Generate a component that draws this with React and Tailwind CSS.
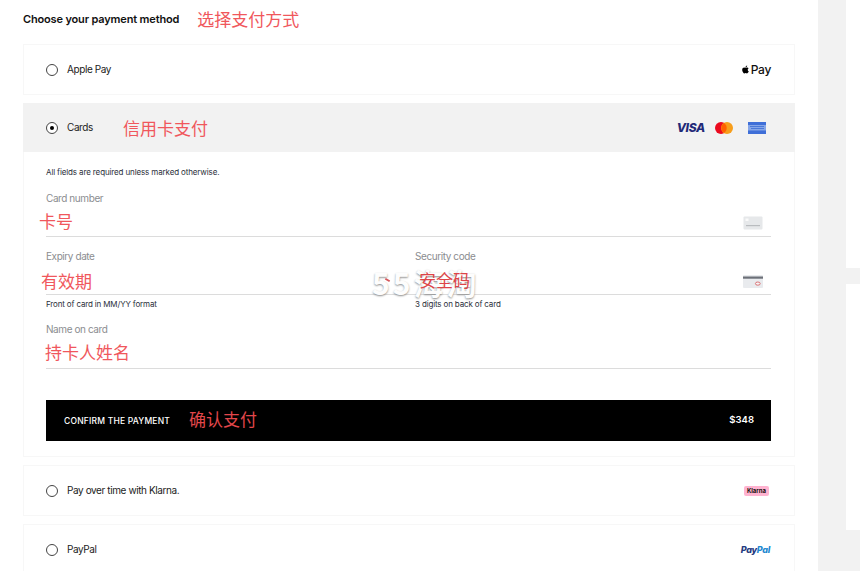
import React from "react";
import { FaApple } from "react-icons/fa";

function Note({ children, className = "" }) {
  return (
    <span className={`relative z-10 font-['Noto_Sans_CJK_SC',sans-serif] text-[17px] leading-6 whitespace-nowrap ${className}`}>
      {children}
    </span>
  );
}

function Radio({ checked }) {
  return (
    <span className="flex h-[12px] w-[12px] shrink-0 items-center justify-center rounded-full border border-[#444] bg-white">
      {checked && <span className="h-[4px] w-[4px] rounded-full bg-black" />}
    </span>
  );
}

function Row({ label, right }) {
  return (
    <div className="flex h-[51px] items-center justify-between border border-[#f7f7f7] pl-[22px] pr-[24px]">
      <div className="flex items-center gap-[9px]">
        <Radio />
        <span className="text-[10px] tracking-[-0.4px] text-[#222]">{label}</span>
      </div>
      {right}
    </div>
  );
}

function Label({ children }) {
  return <div className="h-[14px] text-[10px] leading-[14px] tracking-[-0.42px] text-[#8b8d90]">{children}</div>;
}

function Helper({ children }) {
  return <div className="mt-[3px] h-[12px] text-[8px] leading-[12px] tracking-[-0.15px] text-[#2b2f3a]">{children}</div>;
}

function FrontCard() {
  return (
    <svg width="20" height="14" viewBox="0 0 20 14" className="mr-[8px] mt-[4px]">
      <rect x="0.5" y="0.5" width="19" height="13" rx="1" fill="#e6e8ea" />
      <rect x="2.5" y="2.5" width="3" height="2.5" fill="#fafafa" />
      <rect x="3" y="9" width="14" height="1.2" fill="#b9bcbf" />
    </svg>
  );
}

function BackCard() {
  return (
    <svg width="20" height="13" viewBox="0 0 20 13" className="mr-[8px] mt-[3px]">
      <rect x="0" y="0" width="20" height="13" rx="1" fill="#e9ebee" />
      <rect x="0" y="1.5" width="20" height="2.2" fill="#6c7078" />
      <ellipse cx="14.8" cy="8.6" rx="2.4" ry="1.6" fill="#f5f5f5" stroke="#d5575b" strokeWidth="0.8" />
    </svg>
  );
}

export default function App() {
  return (
    <div className="flex h-[571px] w-[860px] overflow-hidden bg-[#f2f2f2] font-['Inter',sans-serif]">
      <div className="w-[818px] shrink-0 bg-white px-[23px]">
        <div className="flex h-[44px] items-start pt-[7px]">
          <span className="text-[11px] leading-6 font-semibold tracking-[-0.16px] text-[#111]">Choose your payment method</span>
          <Note className="ml-[18px] text-[#f0575c]">选择支付方式</Note>
        </div>

        <Row
          label="Apple Pay"
          right={
            <span className="-mr-[1px] flex items-center text-[12px] font-medium tracking-[-0.3px] text-[#111]">
              <FaApple className="mb-[1px] h-[9px] w-[9px] text-black" />
              <span className="ml-[1px]">Pay</span>
            </span>
          }
        />

        <div className="mt-[8px] border border-t-0 border-[#f7f7f7]">
          <div className="-mx-px flex h-[49px] items-center justify-between bg-[#f2f2f2] pl-[23px] pr-[29px]">
            <div className="flex items-center">
              <Radio checked />
              <span className="ml-[9px] text-[10px] tracking-[-0.4px] text-[#222]">Cards</span>
              <Note className="ml-[30px] text-[#f0575c]">信用卡支付</Note>
            </div>
            <div className="flex items-center">
              <span className="text-[12px] font-extrabold italic tracking-[-0.3px] text-[#1f2a78]">VISA</span>
              <svg width="18" height="12" viewBox="0 0 18 12" className="ml-[10px]">
                <circle cx="6" cy="6" r="6" fill="#eb0a1e" />
                <circle cx="12" cy="6" r="6" fill="#f79e1b" />
                <path d="M9 1a6 6 0 0 1 0 10a6 6 0 0 1 0-10z" fill="#ff5f00" />
              </svg>
              <svg width="18" height="12" viewBox="0 0 18 12" className="ml-[15px]">
                <rect width="18" height="12" fill="#3f6fd8" />
                <rect x="0" y="3" width="18" height="5.5" fill="#86a6e8" />
                <rect x="2" y="4" width="14" height="1" fill="#4a78d8" />
                <rect x="3" y="6" width="13" height="1" fill="#4a78d8" />
              </svg>
            </div>
          </div>

          <div className="pl-[22px] pr-[23px] pb-[15px]">
            <div className="mt-[14px] h-[12px] text-[8px] leading-[12px] tracking-[-0.13px] text-[#2b2f3a]">
              All fields are required unless marked otherwise.
            </div>

            <div className="mt-[13px]">
              <Label>Card number</Label>
              <div className="flex h-[32px] items-center justify-between border-b border-[#dcdcdc]">
                <Note className="-ml-[7px] text-[#f0575c]">卡号</Note>
                <FrontCard />
              </div>
            </div>

            <div className="relative mt-[12px] grid grid-cols-[369px_356px]">
              <span className="pointer-events-none absolute left-[326px] top-[17px] font-['Noto_Sans_CJK_SC',sans-serif] text-[30px] leading-[32px] font-bold tracking-[3px] whitespace-nowrap text-[#fdfdfd] [text-shadow:0_1px_2px_#8f8f8f]">
                55海淘
                <span className="absolute left-[13px] top-[13px] h-[2px] w-[5px] rotate-[30deg] bg-[#d5575b]" />
              </span>
              <div>
                <Label>Expiry date</Label>
                <div className="flex h-[32px] items-center border-b border-[#dcdcdc] pt-[4px]">
                  <Note className="-ml-[5px] text-[#f0575c]">有效期</Note>
                </div>
                <Helper>Front of card in MM/YY format</Helper>
              </div>
              <div>
                <Label>Security code</Label>
                <div className="flex h-[32px] items-center justify-between border-b border-[#dcdcdc] pt-[2px]">
                  <Note className="ml-[4px] text-[#dd4448]">安全码</Note>
                  <BackCard />
                </div>
                <div className="relative z-10">
                  <Helper>3 digits on back of card</Helper>
                </div>
              </div>
            </div>

            <div className="mt-[12px]">
              <Label>Name on card</Label>
              <div className="flex h-[33px] items-center border-b border-[#dcdcdc]">
                <Note className="-ml-[1px] text-[#f0575c]">持卡人姓名</Note>
              </div>
            </div>

            <div className="mt-[31px] flex h-[41px] items-center justify-between bg-black pl-[18px] pr-[17px]">
              <div className="flex items-center">
                <span className="mt-[1px] text-[8.5px] font-medium tracking-[0.2px] text-white">CONFIRM THE PAYMENT</span>
                <Note className="ml-[19px] -mt-[3px] text-[#e2474b]">确认支付</Note>
              </div>
              <span className="text-[9.5px] font-semibold text-white">$348</span>
            </div>
          </div>
        </div>

        <div className="mt-[8px]">
          <Row
            label="Pay over time with Klarna."
            right={
              <span className="mr-[1px] flex h-[10px] w-[25px] items-center justify-center rounded-[2px] bg-[#ffb3d0] text-[6px] font-bold text-[#17120f]">
                Klarna
              </span>
            }
          />
        </div>
        <div className="mt-[8px]">
          <Row
            label="PayPal"
            right={
              <span className="text-[9px] font-extrabold italic tracking-[-0.3px]">
                <span className="text-[#253b80]">Pay</span>
                <span className="text-[#1f88d0]">Pal</span>
              </span>
            }
          />
        </div>
      </div>

      <div className="ml-[28px] flex w-[14px] flex-col">
        <div className="h-[268px] bg-white" />
        <div className="h-[16px]" />
        <div className="h-[246px] bg-white" />
      </div>
    </div>
  );
}
